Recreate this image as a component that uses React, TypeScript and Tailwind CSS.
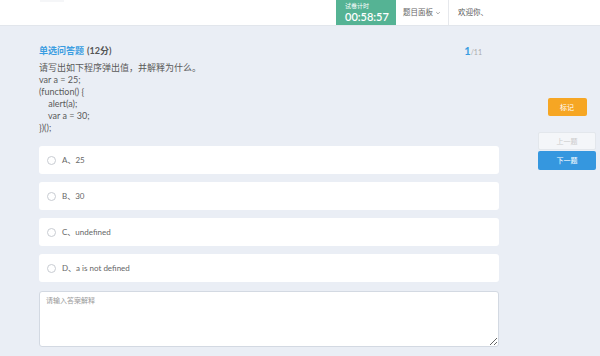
import { useState } from 'react';

const options = [
  { key: 'A', text: '25' },
  { key: 'B', text: '30' },
  { key: 'C', text: 'undefined' },
  { key: 'D', text: 'a is not defined' },
];

const codeLines = ['var a = 25;', '(function() {', '    alert(a);', '    var a = 30;', '})();'];

export default function App() {
  const [picked, setPicked] = useState<string | null>(null);

  return (
    <div
      className="w-[600px] h-[356px] overflow-hidden bg-[#eaeef5] text-[#555]"
      style={{ fontFamily: 'Lato, "Noto Sans CJK SC", sans-serif' }}
    >
      {/* header */}
      <div className="h-[26px] bg-white border-b border-[#e2e6ec] flex">
        <div className="ml-[40px] w-[24px] h-[2px] bg-[#f5f6f8]" />
        <div className="ml-auto flex h-full">
          <div className="w-[60px] h-full bg-[#55b394] text-white flex flex-col justify-center pl-[9px] leading-none">
            <span className="text-[6px] mb-[2px]">试卷计时</span>
            <span className="text-[11px] font-semibold">00:58:57</span>
          </div>
          <div className="w-[53px] h-full flex items-center justify-center text-[7.5px] text-[#666] border-r border-[#e6e8ec]">
            题目面板
            <svg width="6" height="6" viewBox="0 0 10 10" className="ml-[2px]">
              <path d="M2 3.5 L5 6.5 L8 3.5" fill="none" stroke="#888" strokeWidth="1.2" />
            </svg>
          </div>
          <div className="w-[151px] h-full flex items-center pl-[9px] text-[7.5px] text-[#555]">欢迎你、</div>
        </div>
      </div>

      <div className="flex">
        {/* main column */}
        <div className="ml-[39px] w-[460px]">
          <div className="flex items-end justify-between mt-[19px] h-[12px]">
            <div className="text-[9px] font-bold">
              <span className="text-[#3a9de1]">单选问答题</span>
              <span className="text-[#555] ml-[3px]">(12分)</span>
            </div>
            <div className="mr-[17px] leading-none">
              <span className="text-[11px] font-bold text-[#3a9de1]">1</span>
              <span className="text-[7px] text-[#aaa]">/11</span>
            </div>
          </div>
          <div className="mt-[5px] text-[9px] leading-[12px] text-[#5a5a5a]">
            <div>请写出如下程序弹出值，并解释为什么。</div>
            {codeLines.map((l, i) => (
              <div key={i} className="whitespace-pre">
                {l}
              </div>
            ))}
          </div>

          <div className="mt-[12px] flex flex-col gap-[8px]">
            {options.map((o) => (
              <div
                key={o.key}
                onClick={() => setPicked(o.key)}
                className="h-[28px] bg-white rounded-[3px] flex items-center pl-[8px] text-[8px] text-[#666] cursor-pointer"
              >
                <span
                  className={`w-[9px] h-[9px] rounded-full border ${
                    picked === o.key ? 'border-[#3a9de1] bg-[#3a9de1]' : 'border-[#c8ccd2]'
                  }`}
                />
                <span className="ml-[6px]">
                  {o.key}、{o.text}
                </span>
              </div>
            ))}
          </div>

          <textarea
            placeholder="请输入答案解释"
            className="mt-[9px] block w-[460px] h-[56px] bg-white border border-[#d3d9e2] rounded-[3px] px-[6px] py-[3px] text-[7px] placeholder:text-[#999] resize-y outline-none"
          />
        </div>

        {/* right column */}
        <div className="ml-[39px] w-[58px] flex flex-col items-center">
          <button className="mt-[72px] w-[39px] h-[18px] rounded-[2px] bg-[#f6a623] text-white text-[7px]">标记</button>
          <button className="mt-[16px] w-[58px] h-[18px] rounded-[2px] bg-[#f4f6f9] border border-[#e3e7ec] text-[#ccc] text-[7px]">
            上一题
          </button>
          <button className="mt-[1px] w-[58px] h-[19px] rounded-[2px] bg-[#3597df] text-white text-[7px]">下一题</button>
        </div>
      </div>
    </div>
  );
}
